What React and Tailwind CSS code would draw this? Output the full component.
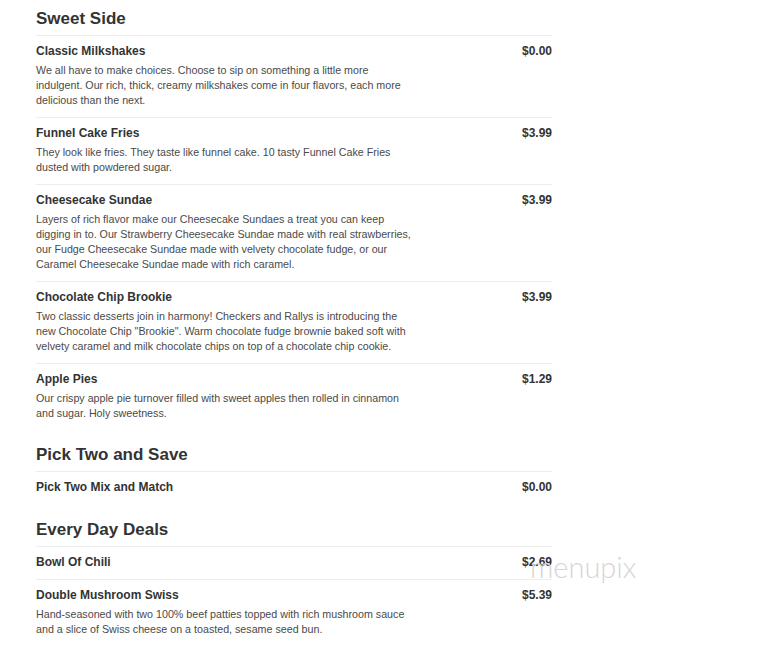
const sections = [
  {
    title: "Sweet Side",
    gap: "",
    items: [
      {
        name: "Classic Milkshakes",
        price: "$0.00",
        desc: [
          "We all have to make choices. Choose to sip on something a little more",
          "indulgent. Our rich, thick, creamy milkshakes come in four flavors, each more",
          "delicious than the next.",
        ],
      },
      {
        name: "Funnel Cake Fries",
        price: "$3.99",
        desc: [
          "They look like fries. They taste like funnel cake. 10 tasty Funnel Cake Fries",
          "dusted with powdered sugar.",
        ],
      },
      {
        name: "Cheesecake Sundae",
        price: "$3.99",
        desc: [
          "Layers of rich flavor make our Cheesecake Sundaes a treat you can keep",
          "digging in to. Our Strawberry Cheesecake Sundae made with real strawberries,",
          "our Fudge Cheesecake Sundae made with velvety chocolate fudge, or our",
          "Caramel Cheesecake Sundae made with rich caramel.",
        ],
      },
      {
        name: "Chocolate Chip Brookie",
        price: "$3.99",
        desc: [
          "Two classic desserts join in harmony! Checkers and Rallys is introducing the",
          'new Chocolate Chip "Brookie". Warm chocolate fudge brownie baked soft with',
          "velvety caramel and milk chocolate chips on top of a chocolate chip cookie.",
        ],
      },
      {
        name: "Apple Pies",
        price: "$1.29",
        desc: [
          "Our crispy apple pie turnover filled with sweet apples then rolled in cinnamon",
          "and sugar. Holy sweetness.",
        ],
      },
    ],
  },
  {
    title: "Pick Two and Save",
    gap: "mt-[15px]",
    items: [{ name: "Pick Two Mix and Match", price: "$0.00", desc: [] }],
  },
  {
    title: "Every Day Deals",
    gap: "mt-[16px]",
    items: [
      { name: "Bowl Of Chili", price: "$2.69", desc: [] },
      {
        name: "Double Mushroom Swiss",
        price: "$5.39",
        desc: [
          "Hand-seasoned with two 100% beef patties topped with rich mushroom sauce",
          "and a slice of Swiss cheese on a toasted, sesame seed bun.",
        ],
      },
    ],
  },
];

function MenuItem({ item }) {
  const hasDesc = item.desc.length > 0;
  return (
    <div
      className={
        "border-t border-[#ececec] pt-[8px] " +
        (hasDesc ? "pb-[9px]" : "pb-[10px]")
      }
    >
      <div className="flex items-center justify-between text-[12px] leading-[14px] font-bold text-[#333]">
        <span>{item.name}</span>
        <span>{item.price}</span>
      </div>
      {hasDesc && (
        <div className="mt-[5px] text-[10.7px] leading-[15px] text-[#4a4a4a]">
          {item.desc.map((line) => (
            <div key={line}>{line}</div>
          ))}
        </div>
      )}
    </div>
  );
}

export default function App() {
  return (
    <div
      className="relative min-h-[650px] bg-white"
      style={{ fontFamily: '"Liberation Sans", Arial, sans-serif' }}
    >
      <div className="w-[516px] ml-[36px] pt-[9px]">
        {sections.map((section) => (
          <div key={section.title} className={section.gap}>
            <h2 className="text-[17px] leading-[20px] font-bold text-[#333] mb-[6px]">
              {section.title}
            </h2>
            {section.items.map((item) => (
              <MenuItem key={item.name} item={item} />
            ))}
          </div>
        ))}
      </div>
      <div
        className="absolute left-[530px] top-[552px] text-[29px] leading-[29px] font-light text-[#d6d6d6] select-none"
        style={{ fontFamily: "Lato, sans-serif" }}
      >
        menupix
      </div>
    </div>
  );
}
